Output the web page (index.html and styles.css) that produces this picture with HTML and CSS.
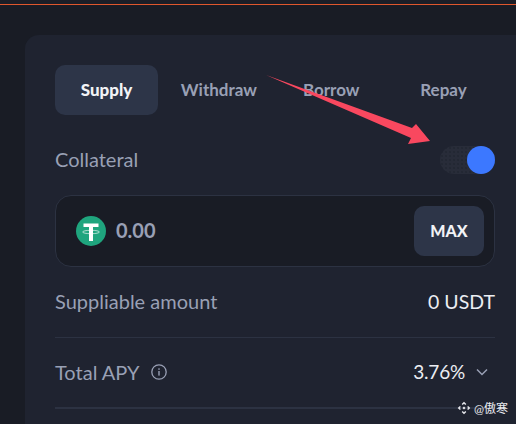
FILE: index.html
```html
<!DOCTYPE html>
<html lang="en">
<head>
<meta charset="utf-8">
<title>Supply</title>
<link rel="stylesheet" href="styles.css">
</head>
<body>
<div class="topbar"></div>
<main class="card">
  <nav class="tabs">
    <div class="tab active">Supply</div>
    <div class="tab">Withdraw</div>
    <div class="tab">Borrow</div>
    <div class="tab">Repay</div>
  </nav>
  <div class="collateral">
    <span class="label">Collateral</span>
    <div class="toggle"><div class="knob"></div></div>
  </div>
  <div class="input">
    <svg class="tether" viewBox="0 0 30 30" width="30" height="30">
      <circle cx="15" cy="15" r="15" fill="#1fa57e"/>
      <ellipse cx="15" cy="16" rx="8.500" ry="1.700" fill="none" stroke="#cfeee4" stroke-width=".8"/>
      <path d="M7.500 7.500h15v3.600h-5.500v14h-4v-14h-5.500z" fill="#fff"/>
    </svg>
    <span class="amount">0.00</span>
    <button class="max">MAX</button>
  </div>
  <div class="row">
    <span class="label">Suppliable amount</span>
    <span class="value">0 USDT</span>
  </div>
  <div class="row last">
    <span class="label with-icon">Total APY
      <svg viewBox="0 0 16 16" width="16" height="16" class="info">
        <circle cx="8" cy="8" r="7.200" fill="none" stroke="currentColor" stroke-width="1.300"/>
        <rect x="7.300" y="7" width="1.400" height="4.600" fill="currentColor"/>
        <rect x="7.300" y="4.300" width="1.400" height="1.500" fill="currentColor"/>
      </svg>
    </span>
    <span class="value apy with-icon">3.76%
      <svg viewBox="0 0 12 8" width="12" height="8" class="chev">
        <path d="M1 1.500l5 5 5-5" fill="none" stroke="currentColor" stroke-width="1.500"/>
      </svg>
    </span>
  </div>
</main>
<svg class="arrow" viewBox="0 0 516 424" width="516" height="424">
  <polygon points="266,75 412,128 416,124 430,141 408,144 411,138" fill="#f9485f"/>
</svg>
<div class="mark">
  <svg viewBox="0 0 14 14" width="14" height="14">
    <path d="M7 .8l2.300 2.300-1 1L7 2.800 5.700 4.100l-1-1zM2.900 4.900l1 1L2.800 7l1.100 1.100-1 1L.7 7zM11.100 4.900L13.300 7l-2.200 2.100-1-1L11.200 7l-1.100-1.100zM7 5.400L8.600 7 7 8.600 5.400 7zM4.700 10.900l1-1L7 11.200l1.300-1.300 1 1L7 13.200z" fill="#e8e9ee"/>
  </svg>
  <span>@傲寒</span>
</div>
</body>
</html>
```
FILE: styles.css
```css
* { box-sizing: border-box; }
html, body { margin: 0; height: 424px; overflow: hidden; }
body {
  position: relative;
  background: #191c25;
  font-family: "Lato", "Noto Sans CJK SC", sans-serif;
  color: #e8eaf0;
}
.topbar {
  height: 5px;
  border-bottom: 1px solid #e0572d;
  background: #1b1e27;
}
.card {
  margin: 30px 0 0 25px;
  width: 491px;
  height: 389px;
  padding: 30px 21px 0 30px;
  background: #1f2330;
  border-radius: 14px 0 0 0;
}
.tabs {
  display: grid;
  grid-template-columns: repeat(4, 103px);
  column-gap: 9.330px;
}
.tab {
  height: 50px;
  padding-bottom: 2px;
  border-radius: 10px;
  display: flex;
  align-items: center;
  justify-content: center;
  font-size: 17px;
  font-weight: 700;
  color: #99a0b5;
}
.tab.active { background: #2d3548; color: #f2f3f6; font-weight: 900; font-size: 17px; }
.label { font-size: 20px; color: #99a0b5; padding-bottom: 2px; }
.collateral {
  display: flex;
  justify-content: space-between;
  align-items: center;
  margin-top: 31px;
  height: 28px;
}
.toggle {
  width: 55px;
  height: 28px;
  border-radius: 14px;
  background-color: #282c39;
  background-image: radial-gradient(circle, #232733 0.700px, transparent 0.900px);
  background-size: 4px 4px;
  display: flex;
  justify-content: flex-end;
}
.knob { width: 28px; height: 28px; border-radius: 50%; background: #3c78ff; }
.input {
  display: flex;
  align-items: center;
  margin-top: 21px;
  height: 72px;
  padding: 0 10px 0 20px;
  background: #191c25;
  border: 1px solid #2c3242;
  border-radius: 16px;
}
.amount { margin-left: 10px; font-size: 20px; font-weight: 700; color: #99a0b5; padding-bottom: 2px; }
.max {
  margin-left: auto;
  width: 70px;
  height: 50px;
  padding: 0 0 2px;
  border: 0;
  border-radius: 10px;
  background: #2d3548;
  color: #f2f3f6;
  font: 900 16px "Lato", sans-serif;
}
.row {
  display: flex;
  justify-content: space-between;
  align-items: center;
  height: 71px;
  border-bottom: 1px solid #2c3242;
}
.row.last { border-bottom-width: 2px; }
.value { font-size: 19.500px; color: #eceef3; padding-bottom: 2px; }
.value.apy { font-size: 19px; letter-spacing: -0.200px; }
.with-icon { display: flex; align-items: center; }
.info { margin-left: 11px; color: #99a0b5; }
.chev { margin-left: 11px; margin-right: 7px; color: #99a0b5; }
.arrow { position: absolute; left: 0; top: 0; pointer-events: none; }
.mark {
  position: absolute;
  right: 8px;
  top: 399px;
  display: flex;
  align-items: center;
  gap: 3px;
  font-size: 12px;
  color: #e8e9ee;
}
```
